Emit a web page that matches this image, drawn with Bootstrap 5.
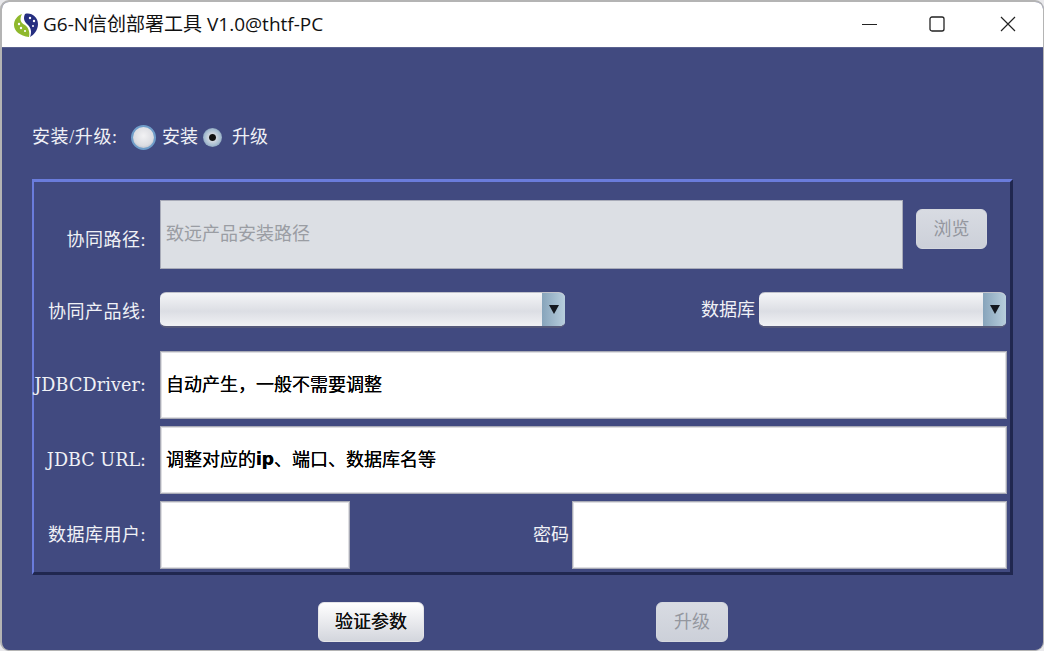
<!DOCTYPE html>
<html lang="zh">
<head>
<meta charset="utf-8">
<title>G6-N信创部署工具</title>
<link href="https://cdn.jsdelivr.net/npm/bootstrap@5.3.0/dist/css/bootstrap.min.css" rel="stylesheet">
<style>
html,body{height:100%;background:#e9e9ec;overflow:hidden}
body{font-family:"Liberation Serif","Noto Sans CJK SC",serif;font-size:18px}
.win{width:1044px;height:651px;border:2px solid #b4b4b4;border-bottom-width:1px;border-right-width:1px;border-radius:9px;overflow:hidden;background:#414a80;display:flex;flex-direction:column}
.ttl{height:46px;flex:none;background:#fff;font-family:"Open Sans","Noto Sans CJK SC",sans-serif;font-size:19px;color:#111;padding-left:11px;border-bottom:1px solid #5a6290}
.ttl-text{margin-left:4px;line-height:1}
.winbtns{margin-left:auto;margin-bottom:1px}
.winbtn{width:71px;height:44px;display:flex;align-items:center;justify-content:center}
.min-ico{margin-left:7px}
.content{padding:0 0 0 30px;color:#f0f1f6;flex:1}
.mode{height:30px;margin-top:74px}
.mode-lbl{letter-spacing:.6px;width:89px;flex:none}
.rad1{width:25px;height:25px;border-radius:50%;background:radial-gradient(circle at 50% 42%,#f2f2f4 0,#dcdde2 60%,#c6c9d3 74%);border:2px solid #6f9dc9;margin:0 6px 0 10px;flex:none}
.rad2{width:19px;height:19px;border-radius:50%;background:radial-gradient(circle,#111 0,#111 22%,#cfd6df 30%,#a4bcd0 60%,#56688a 100%);margin:0 10px 0 5px;flex:none}
.panel{width:981px;height:396px;margin-top:27px;border-style:solid;border-color:#6a7cdc #20274f #20274f #6a7cdc;border-width:3px 3px 3px 2px;padding-top:18px}
.rw{display:flex;align-items:center}
.lbl{width:112px;text-align:right;flex:none;white-space:nowrap;margin-right:14px;letter-spacing:.5px}
.lbl-down{padding-top:12px}
.lbl-down2{padding-top:4px}
.lbl-mono{font-family:"DejaVu Serif",serif;font-size:17.6px;letter-spacing:0}
.lbl-fit{letter-spacing:.1px}
.fld{display:flex;align-items:center;background:#fff;border:1px solid #a9abb6;box-shadow:inset 0 0 0 1px #dedee2;color:#000;padding-left:5px;white-space:nowrap;height:68px;text-shadow:0 0 .4px #000}
.fld.off{background:#dcdfe4;border:1px solid #a8abb8;box-shadow:none;color:#9a9da3;width:743px;height:69px;text-shadow:none}
.rw1{margin-bottom:23px}
.fake-btn{height:40px;border-radius:6px;border:1px solid #c3c6d0;font-size:18px;padding:0;display:flex;align-items:center;justify-content:center;font-family:inherit}
.fake-btn.dis{background:linear-gradient(#d8dbe2,#ccd0d9);color:#94979f;border-color:#d5d8de}
.fake-btn.act{background:linear-gradient(#fff 0,#e7e8ec 55%,#d3d6dd 100%);color:#111;border-color:#e4e4e8;text-shadow:0 0 .4px #000}
.brws{width:71px;margin-left:13px;margin-top:-11px}
.combo{height:36px;display:flex;border-radius:6px;overflow:hidden;background:linear-gradient(#f4f5f7 0,#dcdee4 55%,#f0f1f4 100%);border-top:1px solid #c0c2cb;border-bottom:2px solid #55597a;flex:none}
.combo-l{flex:1}
.combo-a{width:23px;flex:none;background:linear-gradient(90deg,#87a4bb,#b8cedd);display:flex;align-items:center;justify-content:center}
.tri{width:0;height:0;border-left:5.5px solid transparent;border-right:5.5px solid transparent;border-top:9px solid #14181f}
.c1{width:405px}
.c2{width:247px;margin-left:4px}
.lbl-db{margin-left:136px;white-space:nowrap}
.wide{width:847px}
.rw3{margin-top:23px}
.rw4{margin-top:7px}
.rw5{margin-top:7px}
.user{width:190px}
.pw{width:435px;margin-left:4px}
.lbl-pw{margin-left:183px;white-space:nowrap}
.pw{margin-left:3px}
.actions{margin-top:27px}
.b1{width:106px;margin-left:286px}
.b2{width:72px;margin-left:232px}
.ip{font-family:"DejaVu Sans",sans-serif;font-weight:700;font-size:17px}
</style>
</head>
<body>
<div class="win">
  <div class="ttl d-flex align-items-center">
    <svg width="26" height="26" viewBox="0 0 26 26" aria-hidden="true">
      <path d="M9 2C4 4 1 8 1 13c0 6 6 11 15 12 1-4 0-9-4-12C8 11 6 8 9 2z" fill="#8fb82c"/>
      <path d="M12 2c6-2 13 3 13 10 0 6-4 11-8 13 2-5 1-9-2-12-4-3-5-7-3-11z" fill="#262f80"/>
      <circle cx="6" cy="12" r="1.2" fill="#fff"/><circle cx="8" cy="16" r="1.2" fill="#fff"/><circle cx="12" cy="19" r="1.1" fill="#fff"/>
      <circle cx="17" cy="6" r="1.2" fill="#fff"/><circle cx="21" cy="9" r="1.2" fill="#fff"/><circle cx="20" cy="14" r="1" fill="#fff"/>
    </svg>
    <span class="ttl-text">G6-N信创部署工具 V1.0@thtf-PC</span>
    <div class="winbtns d-flex">
      <div class="winbtn"><svg class="min-ico" width="16" height="16" viewBox="0 0 16 16"><path d="M1 8.5h15" stroke="#222" stroke-width="1.2"/></svg></div>
      <div class="winbtn"><svg width="16" height="16" viewBox="0 0 16 16"><rect x="1" y="1" width="14" height="14" rx="2" fill="none" stroke="#222" stroke-width="1.3"/></svg></div>
      <div class="winbtn"><svg width="16" height="16" viewBox="0 0 16 16"><path d="M1 1l14 14M15 1L1 15" stroke="#222" stroke-width="1.2"/></svg></div>
    </div>
  </div>
  <div class="content">
    <div class="mode d-flex align-items-center">
      <span class="mode-lbl">安装/升级:</span><span class="rad1"></span><span>安装</span><span class="rad2"></span><span>升级</span>
    </div>
    <div class="panel">
      <div class="rw rw1">
        <span class="lbl lbl-down">协同路径:</span>
        <div class="fld off">致远产品安装路径</div>
        <button type="button" class="fake-btn dis brws" disabled>浏览</button>
      </div>
      <div class="rw">
        <span class="lbl lbl-down2">协同产品线:</span>
        <div class="combo c1"><span class="combo-l"></span><span class="combo-a"><span class="tri"></span></span></div>
        <span class="lbl-db">数据库</span>
        <div class="combo c2"><span class="combo-l"></span><span class="combo-a"><span class="tri"></span></span></div>
      </div>
      <div class="rw rw3">
        <span class="lbl lbl-mono lbl-fit">JDBCDriver:</span>
        <div class="fld wide">自动产生，一般不需要调整</div>
      </div>
      <div class="rw rw4">
        <span class="lbl lbl-mono">JDBC URL:</span>
        <div class="fld wide">调整对应的<span class="ip">ip</span>、端口、数据库名等</div>
      </div>
      <div class="rw rw5">
        <span class="lbl">数据库用户:</span>
        <div class="fld user"></div>
        <span class="lbl-pw">密码</span>
        <div class="fld pw"></div>
      </div>
    </div>
    <div class="actions d-flex">
      <button type="button" class="fake-btn act b1">验证参数</button>
      <button type="button" class="fake-btn dis b2" disabled>升级</button>
    </div>
  </div>
</div>
<script src="https://cdn.jsdelivr.net/npm/bootstrap@5.3.0/dist/js/bootstrap.bundle.min.js"></script>
</body>
</html>
